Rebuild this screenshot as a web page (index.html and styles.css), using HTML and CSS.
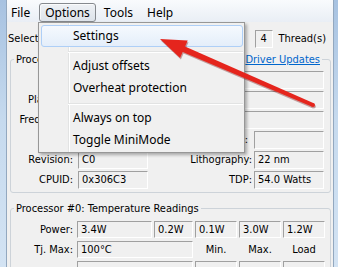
FILE: index.html
```html
<!DOCTYPE html>
<html>
<head>
<meta charset="utf-8">
<title>Core Temp</title>
<link rel="stylesheet" href="styles.css">
</head>
<body>
<div class="window">
  <div class="glass glass-left"></div>
  <div class="client">
    <div class="menubar">
      <span class="mitem mfile">File</span>
      <span class="mitem open">Options</span>
      <span class="mitem">Tools</span>
      <span class="mitem">Help</span>
    </div>
    <div class="selrow">
      <span class="lbl">Select CPU:</span>
      <span class="combo f"></span>
      <span class="cores"><span class="f num"></span></span>
      <span class="f num">4</span><span class="lbl threads">Thread(s)</span>
    </div>
    <div class="group g1">
      <div class="ghead"><span class="legend">Processor Information</span><a class="link">Driver Updates</a></div>
      <div class="info">
        <span class="lab">Model:</span><span class="f wide"></span>
        <span class="lab">Platform:</span><span class="f wide"></span>
        <span class="lab">Frequency:</span><span class="f wide"></span>
        <span class="lab"></span><span class="c3l vid">VID:</span><span class="f c4f"></span>
        <span class="lab">Revision:</span><span class="f c2f">C0</span><span class="c3l">Lithography:</span><span class="f c4f">22 nm</span>
        <span class="lab">CPUID:</span><span class="f c2f">0x306C3</span><span class="c3l">TDP:</span><span class="f c4f">54.0 Watts</span>
      </div>
    </div>
    <div class="group g2">
      <div class="ghead"><span class="legend">Processor #0: Temperature Readings</span></div>
      <div class="temps">
        <span class="lab">Power:</span><span class="f">3.4W</span><span class="f">0.2W</span><span class="f">0.1W</span><span class="f">3.0W</span><span class="f">1.2W</span>
        <span class="lab">Tj. Max:</span><span class="f span2">100°C</span><span class="hd">Min.</span><span class="hd">Max.</span><span class="hd">Load</span>
        <span class="lab"></span><span class="f span2"></span><span class="f"></span><span class="f"></span><span class="f"></span>
      </div>
    </div>
  </div>
  <div class="glass glass-right"></div>

  <div class="dropdown">
    <div class="mi hot">Settings</div>
    <div class="sep"></div>
    <div class="mi">Adjust offsets</div>
    <div class="mi">Overheat protection</div>
    <div class="sep"></div>
    <div class="mi">Always on top</div>
    <div class="mi">Toggle MiniMode</div>
  </div>

  <svg class="arrow" width="338" height="267" viewBox="0 0 338 267">
    <g transform="translate(0.8,1.6)" fill="#6e0000" opacity="0.35">
      <polygon points="180.9,51.25 183.3,45.75 313.8,103.2 312.2,106.8"/>
      <circle cx="313" cy="105" r="2"/>
      <polygon points="160,39 187.7,40.6 180.1,58"/>
    </g>
    <g fill="#e5251d">
      <polygon points="180.9,51.25 183.3,45.75 313.8,103.2 312.2,106.8"/>
      <circle cx="313" cy="105" r="2"/>
      <polygon points="160,39 187.7,40.6 180.1,58"/>
    </g>
  </svg>
</div>
</body>
</html>
```
FILE: styles.css
```css
html, body {
  margin: 0;
  padding: 0;
}
body {
  width: 338px;
  height: 267px;
  overflow: hidden;
  background: #f0f0f0;
  font-family: "DejaVu Sans Condensed", "DejaVu Sans", sans-serif;
  font-stretch: condensed;
  font-size: 11px;
  color: #000;
}
.window {
  position: relative;
  display: flex;
  width: 338px;
  height: 267px;
  overflow: hidden;
}
.glass-left {
  width: 6px;
  border-right: 1px solid #93a8bf;
  background: linear-gradient(#a7c2e1, #c6daee 45%, #d3e3f3);
}
.glass-right {
  width: 4px;
  border-left: 1px solid #93a8bf;
  background: linear-gradient(#a7c2e1, #c6daee 45%, #d3e3f3);
}
.client {
  flex: 1;
  min-width: 0;
  display: flex;
  flex-direction: column;
  background: #f0f0f0;
}

/* menu bar */
.menubar {
  height: 23px;
  box-sizing: border-box;
  padding-top: 3px;
  display: flex;
  align-items: flex-start;
  background: linear-gradient(#f9fbfd, #e9eef5);
}
.mitem {
  font-family: "Noto Sans", sans-serif;
  font-stretch: normal;
  font-size: 12px;
  height: 19px;
  line-height: 17px;
  box-sizing: border-box;
  padding: 0 5px;
  margin-right: 2px;
  border: 1px solid transparent;
  border-radius: 3px;
  white-space: nowrap;
}
.mfile {
  padding: 0 6px 0 3px;
}
.mitem.open {
  border-color: #85898e;
  background: linear-gradient(#eef1f5, #dde3ea);
  box-shadow: inset 1px 1px 0 rgba(255, 255, 255, 0.7);
}

/* select row */
.selrow {
  margin-top: 8px;
  height: 18px;
  line-height: 18px;
  display: flex;
  align-items: center;
  padding: 0 7px 0 1px;
  white-space: nowrap;
}
.combo {
  margin-left: 6px;
  width: 100px;
}
.cores {
  display: flex;
  align-items: center;
  margin-left: auto;
  margin-right: 60px;
}
.threads {
  margin-left: 6px;
}

/* sunken fields */
.f {
  box-sizing: border-box;
  height: 18px;
  line-height: 16px;
  border-style: solid;
  border-width: 1px;
  border-color: #a0a0a0 #ffffff #ffffff #a0a0a0;
  padding-left: 3px;
  white-space: nowrap;
  overflow: hidden;
}
.num {
  width: 18px;
  padding: 0;
  text-align: center;
}

/* group boxes */
.group {
  margin: 11px 2px 0 3px;
  border: 1px solid #cdd3d9;
  border-radius: 3px;
}
.g1 {
  padding-bottom: 1px;
}
.g2 {
  margin-top: 15px;
}
.ghead {
  display: flex;
  justify-content: space-between;
  height: 13px;
  line-height: 13px;
  margin-top: -7px;
  padding: 0 8px 0 3px;
  white-space: nowrap;
}
.legend,
.link {
  background: #f0f0f0;
  padding: 0 2px;
}
.link {
  color: #0066cc;
  text-decoration: underline;
}
.lab {
  text-align: right;
  white-space: nowrap;
  line-height: 18px;
}

/* processor information */
.info {
  display: grid;
  grid-template-columns: 63px 78px 100px 74px;
  grid-auto-rows: 20px;
  margin-top: 5px;
}
.info .lab {
  grid-column: 1;
  padding-right: 1px;
}
.info .wide {
  grid-column: 2 / 5;
  margin: 0 2px 0 4px;
}
.info .c2f {
  grid-column: 2;
  margin: 0 4px;
}
.info .c3l {
  grid-column: 3;
  text-align: right;
  line-height: 18px;
  white-space: nowrap;
}
.info .vid {
  padding-right: 4px;
}
.info .c4f {
  grid-column: 4;
  margin: 0 2px;
}

/* temperature readings */
.temps {
  display: grid;
  grid-template-columns: 64px 75px 39px 42px 42px 42px;
  column-gap: 2px;
  grid-auto-rows: 20px;
  margin-top: 6px;
}
.temps .f {
  height: 17px;
  line-height: 15px;
}
.temps .lab {
  grid-column: 1;
  padding-right: 2px;
  line-height: 17px;
}
.temps .span2 {
  grid-column: 2 / 4;
}
.hd {
  text-align: center;
  line-height: 17px;
}

/* dropdown menu */
.dropdown {
  position: absolute;
  left: 38px;
  top: 22px;
  width: 207px;
  box-sizing: border-box;
  border: 1px solid #979797;
  background-color: #f0f0f0;
  background-image: linear-gradient(to right, transparent 29px, #e2e3e3 29px, #e2e3e3 30px, #ffffff 30px, #ffffff 31px, transparent 31px);
  padding: 2px 1px 1px 2px;
  box-shadow: 2px 2px 3px rgba(0, 0, 0, 0.3);
  font-family: "Noto Sans", sans-serif;
  font-stretch: normal;
  font-size: 12px;
}
.mi {
  height: 22px;
  line-height: 20px;
  box-sizing: border-box;
  padding-left: 31px;
  border: 1px solid transparent;
  border-radius: 3px;
  white-space: nowrap;
}
.mi.hot {
  border-color: #aecff7;
  background: linear-gradient(#f5f9fe, #e4eefa);
}
.sep {
  height: 8px;
  box-sizing: border-box;
  padding: 4px 0 0 27px;
}
.sep::before {
  content: "";
  display: block;
  border-top: 1px solid #e2e3e3;
  border-bottom: 1px solid #ffffff;
}

/* annotation arrow */
.arrow {
  position: absolute;
  left: 0;
  top: 0;
  pointer-events: none;
}
```
